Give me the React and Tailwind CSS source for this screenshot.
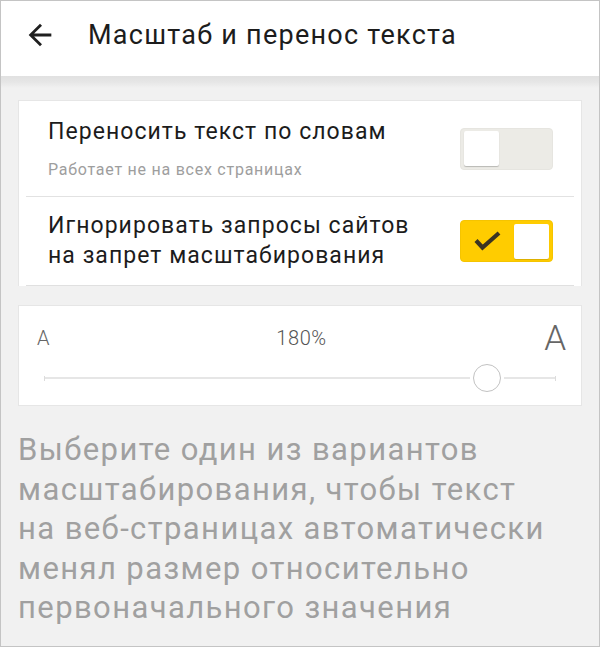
const font = { fontFamily: 'Roboto, "Noto Sans", sans-serif' };

const ArrowBack = () => (
  <svg width="34" height="34" viewBox="0 0 24 24" className="shrink-0">
    <path
      d="M20 11H7.83l5.59-5.59L12 4l-8 8 8 8 1.41-1.41L7.83 13H20v-2z"
      fill="#1f1f1f"
    />
  </svg>
);

const Toggle = ({ on }) => {
  if (on) {
    return (
      <div className="w-[93px] h-[42px] shrink-0 rounded-[4px] bg-[#ffcc00] border border-[#f5c400] flex items-center justify-between p-[3px]">
        <svg width="28" height="22" viewBox="0 0 28 22" className="ml-[10px]">
          <path d="M2 10.5 L8.5 17.5 L25 3" fill="none" stroke="#3b3422" strokeWidth="4.2" />
        </svg>
        <div className="w-[35px] h-[35px] bg-white rounded-[2px] shadow-[0_1px_1px_rgba(0,0,0,0.15)]" />
      </div>
    );
  }
  return (
    <div className="w-[93px] h-[42px] shrink-0 rounded-[4px] bg-[#ecebe6] border border-[#e6e5e0] flex items-center p-[3px]">
      <div className="w-[35px] h-[35px] bg-white rounded-[2px] shadow-[0_1px_1px_rgba(0,0,0,0.22)]" />
    </div>
  );
};

const Slider = () => (
  <div className="flex items-center h-[28px] px-[25px]">
    <div className="w-px h-[5px] bg-[#dcdcdc]" />
    <div className="w-[425px] h-[2px] bg-[#e6e6e6]" />
    <div className="w-[28px] h-[28px] mx-[3px] rounded-full border-[1.5px] border-[#c2c2c2] bg-white shrink-0" />
    <div className="flex-1 h-[2px] bg-[#e6e6e6]" />
    <div className="w-px h-[5px] bg-[#dcdcdc]" />
  </div>
);

export default function App() {
  return (
    <div
      className="w-[600px] h-[647px] box-border border border-[#c4c4c4] bg-[#f1f1f1] overflow-hidden"
      style={font}
    >
      <header className="h-[75px] bg-white flex items-start pl-[22px] pt-[17px]">
        <ArrowBack />
        <h1 className="ml-[31px] mt-[2px] text-[27px] leading-[31px] tracking-[1.25px] font-normal text-[#1c1c1c] whitespace-nowrap">
          Масштаб и перенос текста
        </h1>
      </header>
      <div className="h-[12px] bg-gradient-to-b from-[#e1e1e1] via-[#e6e6e6] to-[#f1f1f1]" />

      <section className="mx-[17px] mt-[12px] bg-white border border-b-0 border-[#e6e6e6]">
        <div className="h-[95px] flex items-center justify-between pl-[29px] pr-[28px]">
          <div>
            <div className="text-[23px] leading-[27px] tracking-[1.05px] text-[#1c1c1c] whitespace-nowrap">
              Переносить текст по словам
            </div>
            <div className="mt-[15px] text-[16px] leading-[20px] tracking-[0.75px] text-[#9e9e9e] whitespace-nowrap">
              Работает не на всех страницах
            </div>
          </div>
          <Toggle on={false} />
        </div>
        <div className="mx-[7px] h-px bg-[#e2e2e2]" />
        <div className="h-[88px] flex items-center justify-between pl-[29px] pr-[28px]">
          <div className="text-[23px] leading-[30px] tracking-[1.05px] text-[#1c1c1c] whitespace-nowrap">
            Игнорировать запросы сайтов
            <br />
            на запрет масштабирования
          </div>
          <Toggle on />
        </div>
        <div className="mx-[7px] h-px bg-[#e0e0e0]" />
      </section>

      <section className="mx-[17px] mt-[19px] h-[101px] box-border bg-white border border-[#e6e6e6]">
        <div className="flex items-start justify-between pl-[18px] pr-[15px] pt-[13px]">
          <span className="mt-[7px] w-[60px] text-[20px] leading-[24px] text-[#666666] font-light">A</span>
          <span className="mt-[7px] text-[20px] leading-[24px] tracking-[0.6px] text-[#555555] font-light">180%</span>
          <span className="w-[60px] text-right text-[35px] leading-[40px] text-[#666666] font-light">A</span>
        </div>
        <div className="mt-[5px]">
          <Slider />
        </div>
      </section>

      <p className="mt-[24px] pl-[17px] text-[31px] leading-[39.5px] tracking-[1.4px] text-[#a0a0a0] whitespace-nowrap">
        Выберите один из вариантов
        <br />
        масштабирования, чтобы текст
        <br />
        на веб-страницах автоматически
        <br />
        менял размер относительно
        <br />
        первоначального значения
      </p>
    </div>
  );
}
